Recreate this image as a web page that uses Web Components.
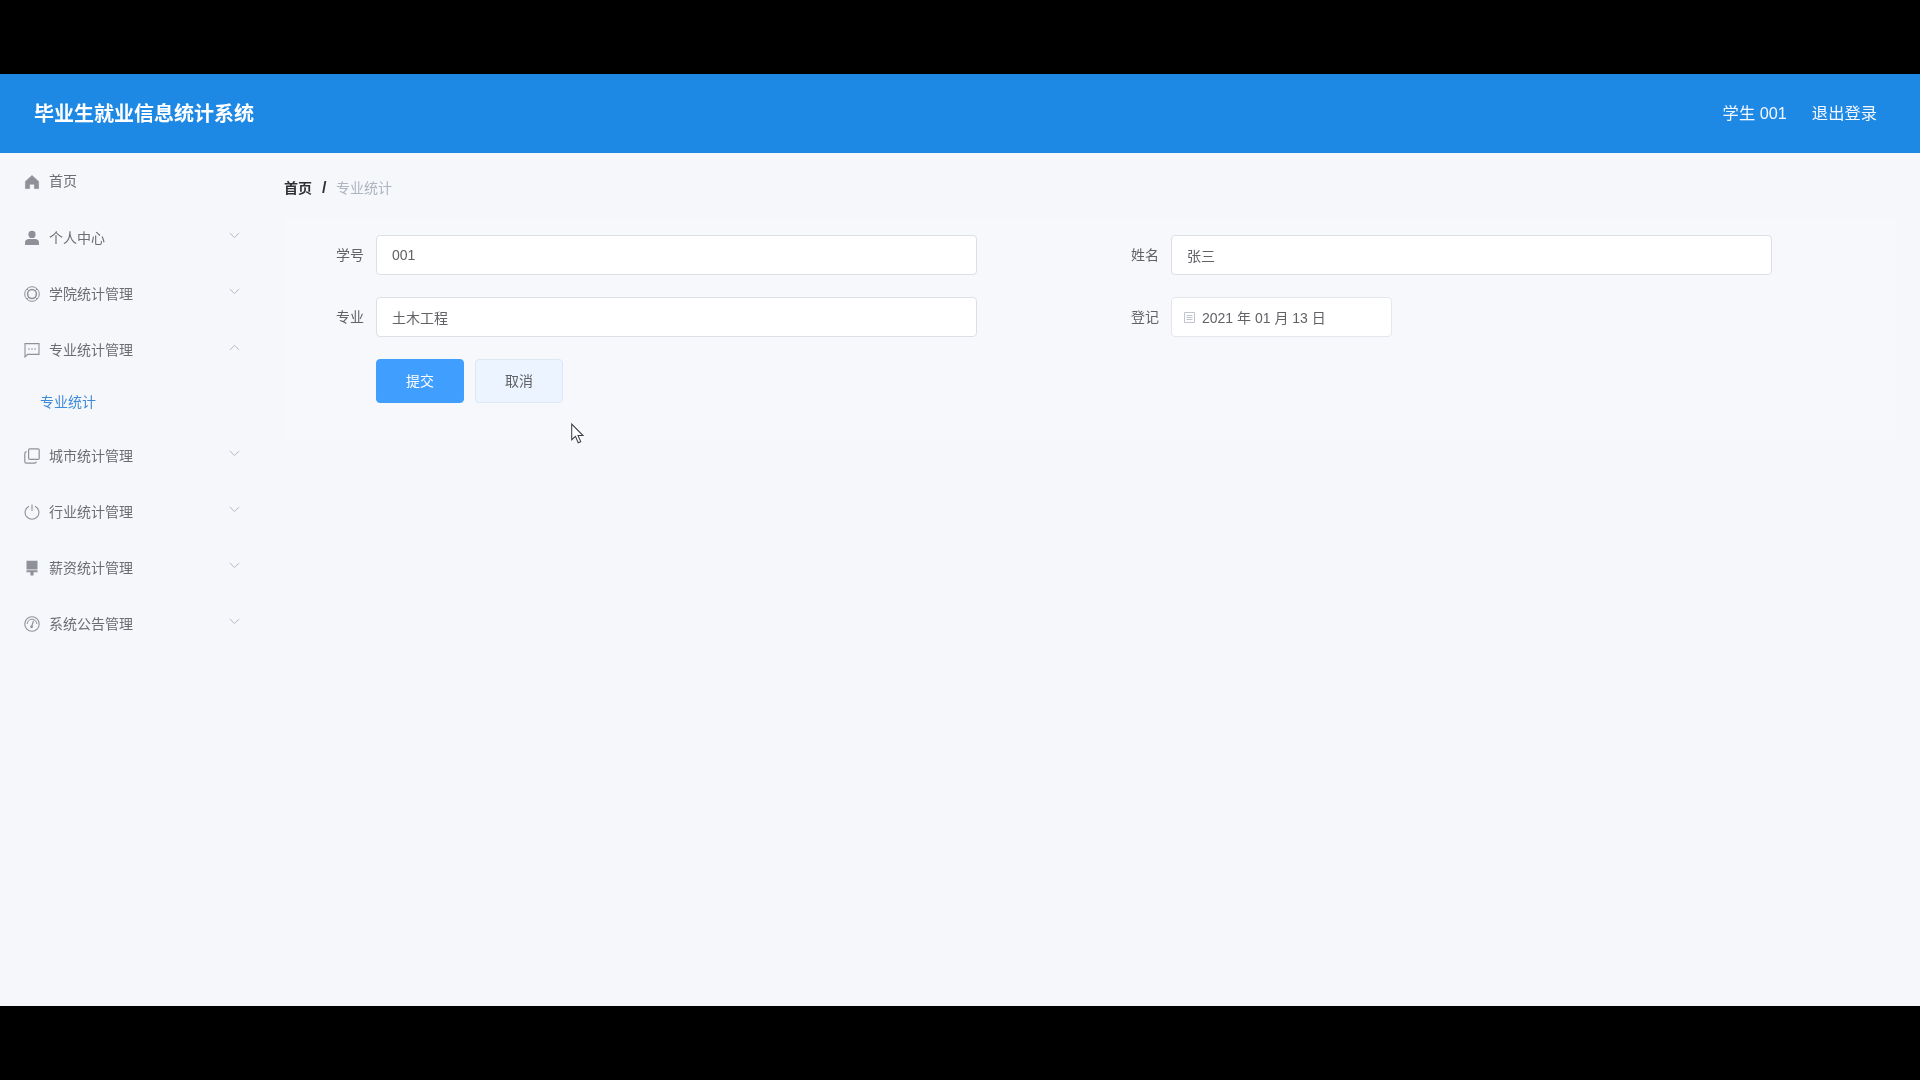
<!DOCTYPE html>
<html lang="zh-CN"><head><meta charset="utf-8"><title>毕业生就业信息统计系统</title>
<style>
html,body{margin:0;padding:0;background:#000;height:100%;overflow:hidden}
body{font-family:"Liberation Sans","Noto Sans CJK SC",sans-serif}
</style></head><body>
<app-shell>
  <app-header slot="header" title-text="毕业生就业信息统计系统" user="学生 001" action="退出登录"></app-header>
  <side-menu slot="side">
    <menu-item icon="home" label="首页" kind="plain"></menu-item>
    <menu-item icon="user" label="个人中心"></menu-item>
    <menu-item icon="ring" label="学院统计管理"></menu-item>
    <menu-item icon="chat" label="专业统计管理" open>
      <sub-item>专业统计</sub-item>
    </menu-item>
    <menu-item icon="copy" label="城市统计管理"></menu-item>
    <menu-item icon="power" label="行业统计管理"></menu-item>
    <menu-item icon="brush" label="薪资统计管理"></menu-item>
    <menu-item icon="gauge" label="系统公告管理"></menu-item>
  </side-menu>
  <bread-crumb home="首页" current="专业统计"></bread-crumb>
  <form-panel>
    <form-field label="学号"><text-box>001</text-box></form-field>
    <form-field label="姓名"><text-box>张三</text-box></form-field>
    <form-field label="专业"><text-box>土木工程</text-box></form-field>
    <form-field label="登记"><date-box>2021 年 01 月 13 日</date-box></form-field>
    <form-field slot="actions"><ui-button primary>提交</ui-button><ui-button>取消</ui-button></form-field>
  </form-panel>
  <mouse-cursor slot="overlay"></mouse-cursor>
</app-shell>
<script>
const ICONS={
home:'<path fill="currentColor" stroke="currentColor" stroke-width=".6" stroke-linejoin="round" d="M8 1.4 1.4 7.4v7.2h4.2v-4.4h4.8v4.4h4.2V7.4z"/>',
user:'<circle cx="8" cy="4.4" r="3.6" fill="currentColor"/><path fill="currentColor" d="M1 15v-2.6C1 10 3.4 9 5 9h6c1.6 0 4 1 4 3.4V15z"/>',
ring:'<g fill="none" stroke="currentColor"><circle cx="8" cy="8" r="7.3" stroke-width="1"/><circle cx="8" cy="8" r="4.4" stroke-width="1.5"/><path stroke-width="1" d="M3 3l1.8 1.8M13 3l-1.8 1.8M3 13l1.8-1.8M13 13l-1.8-1.8"/></g>',
chat:'<path fill="none" stroke="currentColor" stroke-width="1.1" d="M1 1.6h14v10.8H3.6L1 15z"/><g fill="currentColor"><circle cx="5" cy="7" r=".8"/><circle cx="8" cy="7" r=".8"/><circle cx="11" cy="7" r=".8"/></g>',
copy:'<g fill="none" stroke="currentColor" stroke-width="1.2"><rect x="4.6" y=".8" width="10.6" height="10.6" rx="1.2"/><path d="M2.6 3.6C1.4 3.8.8 4.4.8 5.4v8.2c0 1 .7 1.6 1.6 1.6h8.2c1 0 1.6-.6 1.8-1.6"/></g>',
power:'<g fill="none" stroke="currentColor" stroke-width="1.1"><path d="M5 2.2a6.9 6.9 0 1 0 6 0"/><path d="M8 .5v6.4"/></g>',
brush:'<path fill="currentColor" d="M2.5.8h11V9.4h-11zM2.5 10.2h11v2H9.6v3.2H6.4v-3.2H2.5z"/>',
gauge:'<g fill="none" stroke="currentColor"><circle cx="8" cy="8" r="7.2" stroke-width="1.1"/><path stroke-width="1" d="M3.2 8A4.8 4.8 0 0 1 12.8 8"/><path stroke-width="1.2" d="M9.6 4.6 7.8 10"/></g><circle cx="7.6" cy="10.8" r="1.4" fill="currentColor"/>'
};
function def(name,css,html){
  customElements.define(name,class extends HTMLElement{
    constructor(){super();this.attachShadow({mode:'open'})}
    connectedCallback(){
      const h=typeof html==='function'?html(this):html;
      this.shadowRoot.innerHTML='<style>'+css+'</style>'+h;
    }
  });
}
def('app-shell',`
:host{display:flex;flex-direction:column;height:1080px;background:#000;position:relative}
.top{height:74px;flex:none}
.bottom{flex:1}
.app{height:932px;flex:none;display:flex;flex-direction:column;background:#f5f7fb;filter:blur(.35px)}
.body{flex:1;display:flex;min-height:0}
.side{width:264px;flex:none}
.main{flex:1;padding:0 23px 0 20px;min-width:0}
`,`<div class="top"></div><div class="app"><slot name="header"></slot><div class="body"><div class="side"><slot name="side"></slot></div><div class="main"><slot></slot></div></div></div><div class="bottom"></div><slot name="overlay"></slot>`);
def('app-header',`
:host{display:flex;align-items:center;justify-content:space-between;height:79px;background:#1e88e5;color:#fff;padding:0 43px 0 34px}
.t{font-size:20px;font-weight:700;position:relative;top:-1px}
.r{display:flex;gap:25px;font-size:16.3px;color:#f2f8ff;position:relative;top:-2px}
`,el=>`<div class="t">${el.getAttribute('title-text')}</div><div class="r"><span>${el.getAttribute('user')}</span><span>${el.getAttribute('action')}</span></div>`);
def('side-menu',`:host{display:block}`,`<slot></slot>`);
def('menu-item',`
:host{display:block}
.row{height:56px;display:flex;align-items:center;padding:0 23px 0 24px;color:#6b6d72;font-size:14px;box-sizing:border-box;position:relative}
svg.i{width:16px;height:16px;color:#8f9198;flex:none;margin-right:9px;position:relative;top:1px}
.l{flex:1;white-space:nowrap;position:relative}
svg.c{width:11px;height:7px;position:relative;top:-2px;margin-right:1px;color:#b5b8bf;flex:none}
:host([kind="plain"]) .row{padding-bottom:2px}
:host([kind="plain"]) svg.i{top:2px}
`,el=>{
  const open=el.hasAttribute('open'),plain=el.getAttribute('kind')==='plain';
  const c=plain?'':`<svg class="c" viewBox="0 0 11 7"><path fill="none" stroke="currentColor" stroke-width="1" d="${open?'M.8 6 5.5 1.4 10.2 6':'M.8 1 5.5 5.6 10.2 1'}"/></svg>`;
  return `<div class="row"><svg class="i" viewBox="0 0 16 16">${ICONS[el.getAttribute('icon')]||''}</svg><span class="l">${el.getAttribute('label')}</span>${c}</div>${open?'<div class="sub"><slot></slot></div>':''}`;
});
def('sub-item',`:host{display:flex;align-items:center;height:50px;box-sizing:border-box;padding:0 0 2px 40px;font-size:14px;color:#3f8bd8}`,`<slot></slot>`);
def('bread-crumb',`
:host{display:flex;align-items:center;height:65px;box-sizing:border-box;padding-top:2px;font-size:14px}
b{color:#303133;font-weight:700}
i{font-style:normal;font-weight:700;font-size:16px;color:#303133;margin:0 9.5px 0 10px;padding-top:2px}
span{color:#aeb4c0}
`,el=>`<b>${el.getAttribute('home')}</b><i>/</i><span>${el.getAttribute('current')}</span>`);
def('form-panel',`
:host{display:block;background:#f6f8fc;padding:17px 0 38px 12px}
.g{display:grid;grid-template-columns:795px 1fr;row-gap:22px}
.a{margin-top:22px}
`,`<div class="g"><slot></slot></div><div class="a"><slot name="actions"></slot></div>`);
def('form-field',`
:host{display:flex;align-items:center;min-height:40px}
.lab{width:68px;box-sizing:border-box;padding:0 12px 2px 0;text-align:right;font-size:14px;color:#606266;flex:none;margin-left:12px}
.ct{display:flex;gap:11px}
`,el=>`<div class="lab">${el.getAttribute('label')||''}</div><div class="ct"><slot></slot></div>`);
def('text-box',`
:host{display:flex;align-items:center;width:601px;height:40px;box-sizing:border-box;background:#fff;border:1px solid #dcdfe6;border-radius:4px;padding-left:15px;font-size:14px;color:#606266}
`,`<slot></slot>`);
def('date-box',`
:host{display:flex;align-items:center;width:221px;height:40px;box-sizing:border-box;background:#fff;border:1px solid #e4e7ed;border-radius:4px;padding-left:11px;font-size:14px;color:#606266;white-space:nowrap}
svg{width:13px;height:13px;margin-right:6px;color:#c0c4cc;flex:none}
`,`<svg viewBox="0 0 13 13"><path fill="none" stroke="currentColor" d="M1.5 1.5h10v10h-10zM3.5 4.5h6M3.5 6.5h6M3.5 8.5h6"/></svg><slot></slot>`);
def('ui-button',`
:host{display:flex;align-items:center;justify-content:center;width:88px;height:44px;box-sizing:border-box;border-radius:4px;border:1px solid #dbe8f6;background:#ecf5ff;color:#606266;font-size:14px;padding-bottom:2px}
:host([primary]){background:#409eff;border-color:#409eff;color:#fff}
`,`<slot></slot>`);
def('mouse-cursor',`
:host{position:absolute;left:570px;top:423px;width:16px;height:22px;display:block}
svg{display:block}
`,`<svg width="16" height="22" viewBox="0 0 15 21"><path fill="#fff" stroke="#3a3f48" stroke-width="1" d="M1.5 1v15l3.6-3.2 2.6 6 2.4-1-2.6-5.8h4.8z"/></svg>`);
</script>
</body></html>
